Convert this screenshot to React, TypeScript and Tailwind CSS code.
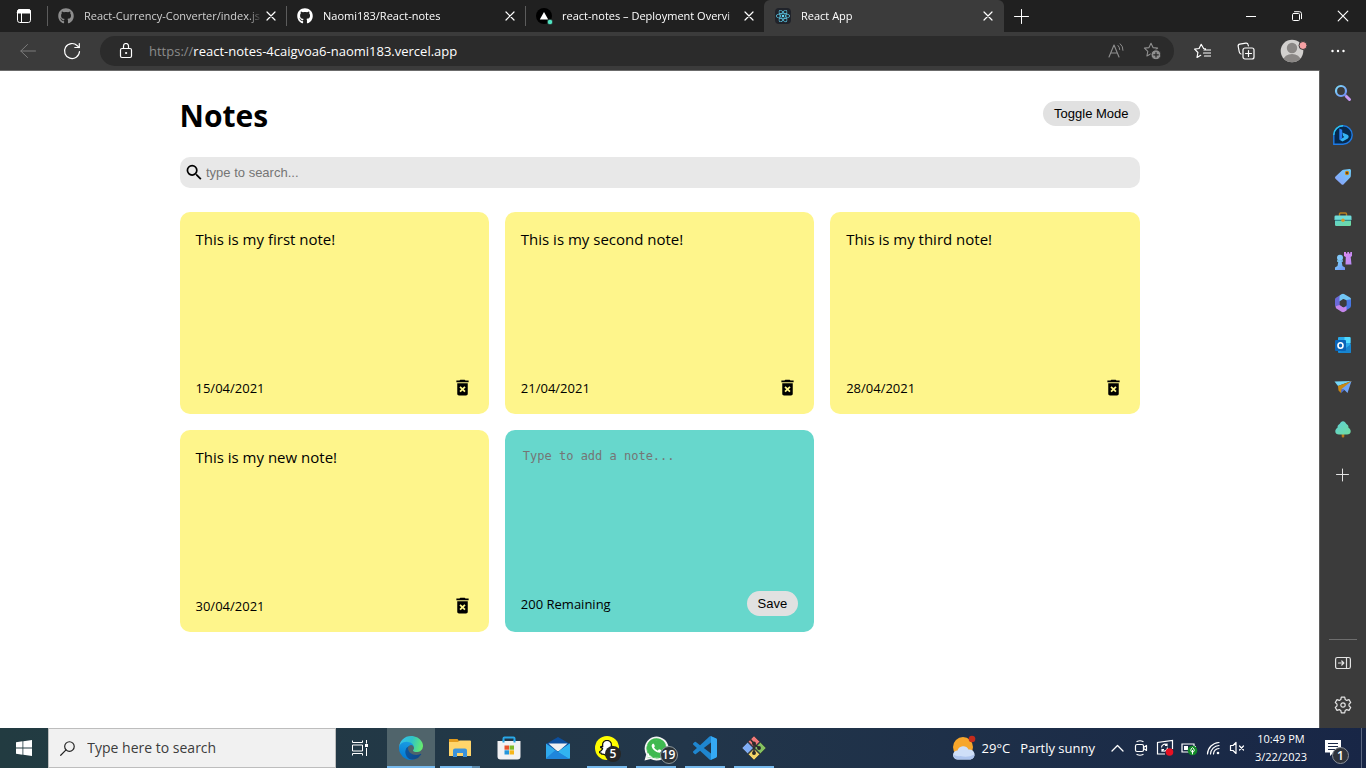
import { useState } from "react";
import type { ReactNode } from "react";
import { FaGithub, FaReact, FaSnapchatGhost, FaWhatsapp } from "react-icons/fa";
import { MdDeleteForever, MdSearch } from "react-icons/md";

type Note = { id: number; text: string; date: string };

const initialNotes: Note[] = [
  { id: 1, text: "This is my first note!", date: "15/04/2021" },
  { id: 2, text: "This is my second note!", date: "21/04/2021" },
  { id: 3, text: "This is my third note!", date: "28/04/2021" },
  { id: 4, text: "This is my new note!", date: "30/04/2021" },
];

const CHARACTER_LIMIT = 200;

function Line({ children, size = 16, box = 16 }: { children: ReactNode; size?: number; box?: number }) {
  return (
    <svg width={size} height={size} viewBox={`0 0 ${box} ${box}`} fill="none" stroke="currentColor" strokeLinecap="round" strokeLinejoin="round" aria-hidden="true">
      {children}
    </svg>
  );
}

/* ---------- Browser chrome ---------- */

function CloseIcon() {
  return (
    <Line size={10} box={10}>
      <path d="M1 1l8 8M9 1l-8 8" strokeWidth="1.2" />
    </Line>
  );
}

function VercelIcon() {
  return (
    <svg width="17" height="17" viewBox="0 0 17 17" className="shrink-0" aria-hidden="true">
      <circle cx="8" cy="8" r="8" fill="#000" />
      <path d="M8 4l4.200 7.400H3.800z" fill="#fff" />
      <circle cx="14" cy="14" r="2.800" fill="#50e3c2" stroke="#202020" strokeWidth="0.8" />
    </svg>
  );
}

function Tab({ icon, title, active = false, faded = false }: { icon: ReactNode; title: string; active?: boolean; faded?: boolean }) {
  return (
    <div
      className={
        active
          ? "-ml-px flex w-[240px] shrink-0 items-center rounded-t-md bg-[#3b3b3b] pr-2 pl-[11px]"
          : "flex w-[239px] shrink-0 items-center pr-2 pl-2.5"
      }
    >
      <span className={faded ? "flex w-4 shrink-0 justify-center text-[#8d8d8d]" : "flex w-4 shrink-0 justify-center text-white"}>{icon}</span>
      <a
        href="#tab"
        className={
          faded
            ? "ml-2.5 w-[178px] overflow-hidden text-[11px] leading-4 whitespace-nowrap text-[#d0d0d0] [mask-image:linear-gradient(to_right,black_92%,transparent)]"
            : "ml-2.5 w-[178px] overflow-hidden text-[11px] leading-4 whitespace-nowrap text-white [mask-image:linear-gradient(to_right,black_92%,transparent)]"
        }
      >
        {title}
      </a>
      <button type="button" aria-label={`Close ${title}`} className="ml-auto flex size-4 items-center justify-center text-white">
        <CloseIcon />
      </button>
    </div>
  );
}

function TabStrip() {
  return (
    <div className="flex h-8 bg-[#202020] text-white">
      <button type="button" aria-label="Tab actions menu" className="flex w-12 shrink-0 items-center justify-center">
        <Line>
          <rect x="1.5" y="1.5" width="13" height="13" rx="2.2" />
          <path d="M1.5 3.5a2 2 0 012-2h9a2 2 0 012 2v1.5h-13z" fill="currentColor" />
          <path d="M5.500 5v9" />
        </Line>
      </button>
      <div className="my-1.5 -ml-px w-px bg-[#5c5c5c]" />
      <Tab icon={<FaGithub size={16} />} title="React-Currency-Converter/index.js" faded />
      <div className="my-1.5 -ml-px w-px bg-[#5c5c5c]" />
      <Tab icon={<FaGithub size={16} />} title="Naomi183/React-notes" />
      <div className="my-1.5 -ml-px w-px bg-[#5c5c5c]" />
      <Tab icon={<VercelIcon />} title="react-notes – Deployment Overvi" />
      <Tab
        icon={
          <span className="flex size-4 shrink-0 items-center justify-center rounded-sm bg-[#20232a] text-[#61dafb]">
            <FaReact size={14} />
          </span>
        }
        title="React App"
        active
      />
      <button type="button" aria-label="New tab" className="flex w-[34px] shrink-0 items-center justify-center">
        <Line>
          <path d="M8.500 1.500v14M1.500 8.500h14" />
        </Line>
      </button>
      <div className="ml-auto flex">
        <button type="button" aria-label="Minimize" className="flex w-[46px] items-center justify-center">
          <Line size={10} box={10}>
            <path d="M0 5.500h10" />
          </Line>
        </button>
        <button type="button" aria-label="Restore" className="flex w-[46px] items-center justify-center">
          <Line size={10} box={10}>
            <rect x="0.5" y="2.5" width="7" height="7" rx="1" />
            <path d="M2.500 0.700h5a2 2 0 012 2v5" />
          </Line>
        </button>
        <button type="button" aria-label="Close window" className="flex w-[46px] items-center justify-center">
          <Line size={12} box={12}>
            <path d="M1.200 1.200l9.600 9.600M10.800 1.200l-9.600 9.600" strokeWidth="1.2" />
          </Line>
        </button>
      </div>
    </div>
  );
}

function ToolButton({ label, children, className = "text-white" }: { label: string; children: ReactNode; className?: string }) {
  return (
    <button type="button" aria-label={label} className={`flex w-11 shrink-0 items-center justify-center ${className}`}>
      {children}
    </button>
  );
}

const starPath = "M8 1.300l2 4.300 4.600.5-3.400 3.200.9 4.700L8 11.700 3.900 14l.9-4.700L1.400 6.100 6 5.600z";

function Toolbar() {
  return (
    <div className="flex h-[38px] bg-[#3b3b3b] px-1.5">
      <ToolButton label="Back" className="text-[#7c7c7c]">
        <Line>
          <path d="M15.500 8H.8M7.500 1.500L.8 8l6.700 6.500" />
        </Line>
      </ToolButton>
      <ToolButton label="Refresh">
        <Line size={18} box={18}>
          <path d="M16.500 9.500a7.500 7.500 0 11-2.200-5.800L16 5.500" strokeWidth="1.2" />
          <path d="M16.300 1.500v4h-4.500" strokeWidth="1.2" />
        </Line>
      </ToolButton>
      <div className="mx-1.5 my-1 flex flex-1 items-center rounded-full bg-[#2b2b2b] pl-[18px]">
        <span className="text-white">
          <Line>
            <rect x="2.500" y="5.500" width="11" height="9" rx="1.500" strokeWidth="1.2" />
            <path d="M5.500 5.500V3a2.500 2.500 0 015 0v2.500" strokeWidth="1.2" />
            <circle cx="8" cy="10" r="0.600" fill="currentColor" />
          </Line>
        </span>
        <div className="ml-[15px] flex-1 text-[13px] leading-5 text-[#8c8c8c]">
          https://<span className="text-white">react-notes-4caigvoa6-naomi183.vercel.app</span>
        </div>
        <button type="button" aria-label="Read aloud" className="flex w-9 items-center justify-center text-[#8f8f8f]">
          <Line size={18} box={18}>
            <path d="M2 15L7 3l5 12M3.800 11h6.400" strokeWidth="1.1" />
            <path d="M11 3.500q1.700 1.500 1.700 4M13.200 1.800q3 2.500 2.800 6.500" />
          </Line>
        </button>
        <button type="button" aria-label="Add this page to favorites" className="mr-1 flex w-9 items-center justify-center text-[#8f8f8f]">
          <Line size={18} box={18}>
            <path d={starPath} strokeWidth="1.1" />
            <circle cx="13" cy="12.800" r="5" fill="currentColor" stroke="#2b2b2b" strokeWidth="1" />
            <path d="M13 10.500v4.600M10.700 12.800h4.600" stroke="#2b2b2b" strokeWidth="1.2" />
          </Line>
        </button>
      </div>
      <ToolButton label="Favorites">
        <Line size={17} box={17}>
          <path d="M11.500 5.800L9.600 5.500 7.200 1.300 5.100 5.500l-4.500.7 3.300 3.300-.9 5 3.700-2.200M10 7h6.500M9.500 10h7M10.500 13h6" strokeWidth="1.2" />
        </Line>
      </ToolButton>
      <ToolButton label="Collections">
        <Line size={18} box={18}>
          <path d="M4 12a2.500 2.500 0 01-1.700-2L1.200 4.500a2 2 0 011.600-2.300l6-1a2 2 0 012.300 1.500l.3 1.100" strokeWidth="1.2" />
          <rect x="6" y="6" width="11" height="11" rx="2" strokeWidth="1.2" />
          <path d="M11.500 8.500v6M8.500 11.500h6" strokeWidth="1.2" />
        </Line>
      </ToolButton>
      <button type="button" aria-label="Profile" className="flex w-12 shrink-0 items-center justify-center pl-[3px]">
        <svg width="27" height="24" viewBox="0 0 27 24" aria-hidden="true">
          <defs>
            <clipPath id="avatar-circle">
              <circle cx="12" cy="12" r="11.300" />
            </clipPath>
          </defs>
          <circle cx="12" cy="12" r="11.300" fill="#d2d0ce" />
          <g clipPath="url(#avatar-circle)" fill="#8a8785">
            <circle cx="12" cy="9" r="5.200" />
            <ellipse cx="12" cy="21" rx="8.500" ry="6" />
          </g>
          <circle cx="23" cy="6.500" r="4" fill="#f7a1a4" stroke="#3b3b3b" strokeWidth="1" />
        </svg>
      </button>
      <ToolButton label="Settings and more">
        <Line>
          <path d="M2.500 8h.01M8 8h.01M13.500 8h.01" strokeWidth="2.4" />
        </Line>
      </ToolButton>
    </div>
  );
}

/* ---------- Notes page ---------- */

function NoteCard({ note, onDelete }: { note: Note; onDelete: (id: number) => void }) {
  return (
    <article className="flex min-h-[202px] flex-col justify-between rounded-[10px] bg-[#fef58b] p-4">
      <p className="text-[15px] leading-[22px]">{note.text}</p>
      <div className="flex items-center justify-between">
        <small className="text-[13px] leading-5">{note.date}</small>
        <button type="button" aria-label={`Delete note: ${note.text}`} onClick={() => onDelete(note.id)}>
          <MdDeleteForever size={21} />
        </button>
      </div>
    </article>
  );
}

function NotesPage() {
  const [notes, setNotes] = useState(initialNotes);
  const [query, setQuery] = useState("");
  const [draft, setDraft] = useState("");
  const [dark, setDark] = useState(false);

  const save = () => {
    if (!draft.trim()) return;
    setNotes([...notes, { id: Date.now(), text: draft, date: new Date().toLocaleDateString("en-GB") }]);
    setDraft("");
  };

  return (
    <main className={dark ? "flex-1 border-t border-[#6b6b6b] bg-black" : "flex-1 border-t border-[#6b6b6b] bg-white"}>
      <div className="mx-auto max-w-[960px] text-black">
        <header className="mb-px flex h-[85px] items-center justify-between">
          <h1 className={dark ? "pt-1 text-[30px] leading-10 font-bold text-white" : "pt-1 text-[30px] leading-10 font-bold"}>Notes</h1>
          <button
            type="button"
            className="rounded-full bg-[#e1e1e1] px-[11px] font-['Liberation_Sans',sans-serif] text-[13px] leading-[25px]"
            onClick={() => setDark(!dark)}
          >
            Toggle Mode
          </button>
        </header>
        <label className="flex h-[31px] items-center gap-0.5 rounded-[10px] bg-[#e8e8e8] pl-1">
          <MdSearch size={21} />
          <input
            type="text"
            aria-label="Search notes"
            placeholder="type to search..."
            value={query}
            onChange={(event) => setQuery(event.target.value)}
            className="w-full bg-transparent font-['Liberation_Sans',sans-serif] text-[13px] leading-5 outline-none placeholder:text-[#757575]"
          />
        </label>
        <div className="mt-6 grid grid-cols-3 gap-4">
          {notes
            .filter((note) => note.text.toLowerCase().includes(query.toLowerCase()))
            .map((note) => (
              <NoteCard key={note.id} note={note} onDelete={(id) => setNotes(notes.filter((item) => item.id !== id))} />
            ))}
          <article className="flex min-h-[202px] flex-col justify-between rounded-[10px] bg-[#67d7cc] p-4">
            <textarea
              aria-label="New note"
              placeholder="Type to add a note..."
              maxLength={CHARACTER_LIMIT}
              value={draft}
              onChange={(event) => setDraft(event.target.value)}
              className="h-[120px] w-full resize-none bg-transparent px-0.5 py-0.5 font-['DejaVu_Sans_Mono',monospace] text-[12px] leading-4 outline-none placeholder:text-[#757575]"
            />
            <div className="flex items-center justify-between">
              <small className="text-[13px] leading-5">{CHARACTER_LIMIT - draft.length} Remaining</small>
              <button
                type="button"
                className="rounded-full bg-[#e1e1e1] px-[11px] font-['Liberation_Sans',sans-serif] text-[13px] leading-[25px]"
                onClick={save}
              >
                Save
              </button>
            </div>
          </article>
        </div>
      </div>
    </main>
  );
}

/* ---------- Edge sidebar ---------- */

function SideButton({ label, children }: { label: string; children: ReactNode }) {
  return (
    <button type="button" aria-label={label} className="flex h-[42px] w-full items-center justify-center text-[#e3e3e3]">
      {children}
    </button>
  );
}

function Sidebar() {
  return (
    <aside className="flex w-[47px] shrink-0 flex-col items-center border-l border-[#5f5f5f] bg-[#3b3b3b] py-0.5">
      <svg width="0" height="0" className="absolute" aria-hidden="true">
        <defs>
          <linearGradient id="sky" x1="0" y1="0" x2="1" y2="1">
            <stop offset="0" stopColor="#7fdcfb" />
            <stop offset="1" stopColor="#6f8df5" />
          </linearGradient>
          <linearGradient id="tag" x1="1" y1="0" x2="0" y2="1">
            <stop offset="0" stopColor="#6ccffb" />
            <stop offset="1" stopColor="#8c9df8" />
          </linearGradient>
          <linearGradient id="violet" x1="0" y1="0" x2="1" y2="1">
            <stop offset="0" stopColor="#e08bf0" />
            <stop offset="1" stopColor="#b58af5" />
          </linearGradient>
          <linearGradient id="mint" x1="0" y1="0" x2="1" y2="1">
            <stop offset="0" stopColor="#5fd0d6" />
            <stop offset="1" stopColor="#6fdca0" />
          </linearGradient>
        </defs>
      </svg>
      <SideButton label="Search">
        <svg width="18" height="18" viewBox="0 0 18 18">
          <circle cx="7" cy="7" r="5" fill="none" stroke="url(#sky)" strokeWidth="2.2" />
          <path d="M12.200 12.200l3.300 3.300" stroke="#c79af5" strokeWidth="3" strokeLinecap="round" />
          <path d="M10.500 10.500l1.500 1.500" stroke="#7c8ff0" strokeWidth="1.6" />
        </svg>
      </SideButton>
      <SideButton label="Bing">
        <svg width="20" height="20" viewBox="0 0 20 20">
          <path d="M.8 19.200V10a9.200 9.200 0 119.200 9.200z" fill="#06294d" stroke="#1e7be6" strokeWidth="1.4" />
          <path d="M.8 10A9.200 9.200 0 0110 .8" fill="none" stroke="#2cc6ee" strokeWidth="1.4" />
          <path d="M9.300 7.500l5.200 2.300a2.200 2.200 0 01.3 3.700L9.500 16.500l-3-1.800 4.800-2.800-1.200-.8z" fill="#35b4f5" />
          <path d="M6.300 3.500l2.900 1.200v8.600L6.800 15l-.5-1z" fill="#2a7df0" />
        </svg>
      </SideButton>
      <SideButton label="Shopping">
        <svg width="18" height="18" viewBox="0 0 18 18">
          <path d="M9.500 1.700L15.500 1a1.400 1.400 0 011.500 1.500l-.2 5.500a2 2 0 01-.6 1.400l-6.500 6.800a1.600 1.600 0 01-2.300 0L1.500 10.700a1.600 1.600 0 010-2.300L8.200 2.200a2 2 0 011.300-.5z" fill="url(#tag)" />
          <circle cx="13" cy="5" r="2.200" fill="#c98512" />
          <circle cx="13" cy="5" r="1" fill="#453822" />
        </svg>
      </SideButton>
      <SideButton label="Tools">
        <svg width="18" height="18" viewBox="0 0 18 18">
          <path d="M5.500 6V4a1 1 0 011-1h5a1 1 0 011 1v2" fill="none" stroke="#b8801e" strokeWidth="1.4" />
          <rect x="1" y="6" width="16" height="10" rx="1.200" fill="url(#mint)" />
          <path d="M.5 6.800A1.300 1.300 0 011.800 5.500h14.400a1.300 1.300 0 011.300 1.300V10H.5z" fill="#6fdcd8" />
          <path d="M1 10.300h16" stroke="#25777e" />
          <circle cx="9" cy="10.300" r="1.700" fill="#d69a28" />
        </svg>
      </SideButton>
      <SideButton label="Games">
        <svg width="20" height="20" viewBox="0 0 20 20">
          <path d="M11 1h2v1.500h1.300V1h1.700v1.500h1.300V1H19v4l-1.300 1 .8 7.500h-6L12.800 6 11 5z" fill="url(#violet)" />
          <circle cx="7" cy="6.700" r="3" fill="#82c9fb" />
          <path d="M4 9.300h6v1.500H8.700l.8 4.200 2.500 1.600V19H2v-2.400l2.500-1.600.8-4.200H4z" fill="url(#sky)" />
        </svg>
      </SideButton>
      <SideButton label="Microsoft 365">
        <svg width="18" height="20" viewBox="0 0 18 20">
          <path d="M7.500 1.200L9 10l-2.500 6L2 13.800A2 2 0 011 12V6.500a2 2 0 011-1.800z" fill="#6b69d8" />
          <path d="M7.500 1.200a3 3 0 013 0l5.500 3.300a2 2 0 011 1.800V9L9.500 6 5.500 8.500V4.500a3 3 0 012-3.300z" fill="#72c6f4" />
          <path d="M17 6.300v6.500a3 3 0 01-1.500 2.500l-5 3-3.500-2 5.500-3.800V7z" fill="#4777e4" />
          <path d="M1.500 13.300l4-1.300 4 2.500 3-1v4l-2 1.200a3 3 0 01-3 0L2 15.300z" fill="#c485eb" />
          <path d="M9 6.300l3.300 1.900v3.900L9 14l-3.300-1.900V8.200z" fill="#3b3b3b" />
        </svg>
      </SideButton>
      <SideButton label="Outlook">
        <svg width="18" height="18" viewBox="0 0 18 18">
          <rect x="4" y="1" width="12.500" height="14" rx="1" fill="#28a8ea" />
          <path d="M10.500 1h5a1 1 0 011 1v5h-6z" fill="#50d9ff" />
          <path d="M17 8v8a1 1 0 01-1 1H5a1 1 0 01-1-1v-2l7-1z" fill="#1490df" />
          <path d="M17 8.500L5 16.700h11a1 1 0 001-1z" fill="#1783ce" />
          <rect x="1" y="4" width="11" height="11" rx="1" fill="#0a64b8" />
          <ellipse cx="6.500" cy="9.500" rx="2.500" ry="2.800" fill="none" stroke="#fff" strokeWidth="1.6" />
        </svg>
      </SideButton>
      <SideButton label="Drop">
        <svg width="18" height="16" viewBox="0 0 18 16">
          <path d="M17.500 2L.5 2.500 4 7z" fill="#75d8fa" />
          <path d="M17.500 2L4 7l.5 4.500L7 14l1-3z" fill="#c98812" />
          <path d="M17.500 2L7.500 10l3 1 3 3z" fill="#6fa4f8" />
          <path d="M7.500 10L7 14l3.500-3z" fill="#4a6fd8" />
        </svg>
      </SideButton>
      <SideButton label="E-tree">
        <svg width="18" height="18" viewBox="0 0 18 18">
          <rect x="7.700" y="11" width="2.600" height="6.500" rx="1" fill="#b9791b" />
          <path d="M9 1.200c1.500 0 2.400 1.200 3.200 2.600 2 1.200 2.300 2.400 2.300 4 1.600 1 2.200 2.200 2.200 3.600 0 2-1.600 3-3.700 3H5c-2.100 0-3.700-1-3.700-3 0-1.400.6-2.600 2.200-3.600 0-1.600.3-2.800 2.300-4C6.600 2.400 7.500 1.200 9 1.200z" fill="url(#mint)" />
        </svg>
      </SideButton>
      <div className="mt-1 w-full">
        <SideButton label="Customize sidebar">
          <Line size={14} box={14}>
            <path d="M6.500 1v12M.5 6.500h12" />
          </Line>
        </SideButton>
      </div>
      <div className="mt-auto mb-0.5 h-px w-7 bg-[#6e6e6e]" />
      <SideButton label="Hide sidebar">
        <Line>
          <rect x="0.600" y="2.500" width="14.800" height="11" rx="1.800" strokeWidth="1.2" />
          <path d="M11.500 2.500v11M3.500 8h5M6.800 6l2 2-2 2" strokeWidth="1.2" />
        </Line>
      </SideButton>
      <SideButton label="Settings">
        <Line size={18} box={18}>
          <path d="M7.300 1.200h3.400l.5 2.300 1.500.9 2.300-.8 1.700 2.900-1.700 1.600v1.800l1.700 1.600-1.700 2.900-2.300-.8-1.500.9-.5 2.300H7.300l-.5-2.300-1.500-.9-2.300.8-1.700-2.900L3 9.900V8.100L1.300 6.500 3 3.600l2.300.8 1.500-.9z" strokeWidth="1.2" />
          <circle cx="9" cy="9" r="2.200" strokeWidth="1.2" />
        </Line>
      </SideButton>
    </aside>
  );
}

/* ---------- Windows taskbar ---------- */

function EdgeLogo() {
  return (
    <svg width="24" height="24" viewBox="0 0 256 256" aria-hidden="true">
      <defs>
        <linearGradient id="edge-dark" x1="0" y1="0" x2="1" y2="0.500">
          <stop offset="0" stopColor="#0c59a4" />
          <stop offset="1" stopColor="#114a8b" />
        </linearGradient>
        <linearGradient id="edge-blue" x1="0.500" y1="0" x2="0.300" y2="1">
          <stop offset="0" stopColor="#1b9de2" />
          <stop offset="1" stopColor="#0078d4" />
        </linearGradient>
        <linearGradient id="edge-green" x1="0" y1="0.300" x2="1" y2="0.500">
          <stop offset="0" stopColor="#35c1f1" />
          <stop offset="0.500" stopColor="#2fc2c8" />
          <stop offset="1" stopColor="#66eb6e" />
        </linearGradient>
      </defs>
      <path d="M231 190.500c-3.400 1.800-6.900 3.400-10.500 4.700a101.500 101.500 0 01-35.900 6.400c-47.300 0-88.500-32.500-88.500-74.300a31.500 31.500 0 0116.400-27.300c-42.800 1.800-53.800 46.400-53.800 72.500 0 73.900 68.100 81.400 82.800 81.400 7.900 0 19.800-2.300 27-4.600l1.300-.4a128.300 128.300 0 0066.600-52.800 4 4 0 00-5.400-5.600z" fill="url(#edge-dark)" />
      <path d="M105.700 241.400a79.200 79.200 0 01-22.700-21.300 80.700 80.700 0 0129.500-120c3.200-1.500 8.400-4.100 15.500-4a32.400 32.400 0 0125.700 13 31.900 31.900 0 016.300 18.700c0-.2 24.500-79.600-80-79.600-43.900 0-80 41.600-80 78.200a130.200 130.200 0 0012.100 56 128 128 0 00156.400 67 75.500 75.500 0 01-62.800-8z" fill="url(#edge-blue)" />
      <path d="M152.300 148.900c-.9 1-3.300 2.500-3.300 5.600 0 2.600 1.700 5.200 4.800 7.300 14.400 10 41.400 8.700 41.500 8.700 10.600 0 21.100-2.900 30.300-8.300A61.400 61.400 0 00256 109.200c.3-22.400-8-37.300-11.300-43.900C223.500 23.900 177.700 0 128 0A128 128 0 000 126.200c.5-36.500 36.800-66 80-66 3.500 0 23.500.3 42 10.100 16.300 8.600 24.900 18.900 30.800 29.200 6.200 10.700 7.300 24.100 7.300 29.500 0 5.300-2.700 13.300-7.800 19.900z" fill="url(#edge-green)" />
    </svg>
  );
}

function ExplorerLogo() {
  return (
    <svg width="24" height="24" viewBox="0 0 24 24" aria-hidden="true">
      <path d="M1 3h8.500l1.500 2H23v4H1z" fill="#e39c1d" />
      <path d="M1 6h9l1.500-1.500H22a1 1 0 011 1V20H1z" fill="#ffd56b" />
      <path d="M5 21v-6.500a2 2 0 012-2h10a2 2 0 012 2V21h-4v-4H9v4z" fill="#3b93dc" />
    </svg>
  );
}

function StoreLogo() {
  return (
    <svg width="24" height="24" viewBox="0 0 24 24" aria-hidden="true">
      <path d="M6.500 6.500V2.500a1 1 0 011-1h9a1 1 0 011 1v4" fill="none" stroke="#29a8e8" strokeWidth="2" />
      <path d="M.5 5h23v15.500a3 3 0 01-3 3h-17a3 3 0 01-3-3z" fill="#f1f1f3" />
      <path d="M6.500 4.500v2M17.500 4.500v2" stroke="#29a8e8" strokeWidth="2" />
      <path d="M7.500 9.500H12v4.200H7.500z" fill="#e8512c" />
      <path d="M12.500 9.500H17v4.200h-4.500z" fill="#7fba28" />
      <path d="M7.500 14.300H12v4.200H7.500z" fill="#2496dc" />
      <path d="M12.500 14.300H17v4.200h-4.500z" fill="#f6b61a" />
    </svg>
  );
}

function MailLogo() {
  return (
    <svg width="24" height="24" viewBox="0 0 24 24" aria-hidden="true">
      <path d="M0 8l12-7 12 7v5H0z" fill="#0c4f9e" />
      <path d="M2.500 7.500h19L13 15h-2z" fill="#f0f0f2" />
      <path d="M0 7.500L12 16v7H1a1 1 0 01-1-1z" fill="#2fa9ec" />
      <path d="M24 7.500L2 22.800h21a1 1 0 001-1z" fill="#35bdf4" />
      <path d="M0 22.300L9.500 14l2.500 1.800 11.500 7-.5.200H1z" fill="#1f86da" />
      <path d="M24 7.500v15L12.500 15.500z" fill="#31b4f0" />
    </svg>
  );
}

function GitLogo() {
  return (
    <svg width="26" height="26" viewBox="0 0 26 26" aria-hidden="true">
      <g transform="rotate(45 13 13)" stroke="#33302a" strokeWidth="0.500">
        <rect x="4.500" y="4.500" width="8" height="8" fill="#f0797a" />
        <rect x="13.500" y="4.500" width="8" height="8" fill="#84c261" />
        <rect x="4.500" y="13.500" width="8" height="8" fill="#7fadf5" />
        <rect x="13.500" y="13.500" width="8" height="8" fill="#f4d568" />
      </g>
      <g stroke="#2b2b2b" strokeWidth="1.500" fill="#2b2b2b">
        <path d="M9.500 4.500l3.500 4v9M13 9l5 4" fill="none" />
        <circle cx="13" cy="8.500" r="1.200" />
        <circle cx="18" cy="13" r="1.200" />
        <circle cx="13" cy="18" r="1.200" />
      </g>
    </svg>
  );
}

function Badge({ children, className }: { children: ReactNode; className: string }) {
  return (
    <span className={`absolute flex items-center justify-center rounded-full text-[12px] leading-none font-semibold text-white ${className}`}>
      {children}
    </span>
  );
}

function TaskApp({ label, children, state = "idle" }: { label: string; children: ReactNode; state?: "idle" | "running" | "focused" | "grouped" }) {
  return (
    <button
      type="button"
      aria-label={label}
      className={
        state === "focused"
          ? "flex w-12 flex-col items-center bg-[#50646b]"
          : "flex w-12 flex-col items-center"
      }
    >
      <span className="relative flex flex-1 items-center justify-center pt-0.5">{children}</span>
      {state === "idle" && <span className="h-0.5" />}
      {state === "focused" && <span className="h-0.5 w-full bg-[#76b9ed]" />}
      {state === "running" && <span className="h-0.5 w-10 bg-[#76b9ed]" />}
      {state === "grouped" && (
        <span className="flex h-0.5 w-10">
          <span className="flex-1 bg-[#76b9ed]" />
          <span className="w-2 bg-[#5a89ac]" />
        </span>
      )}
    </button>
  );
}

function TrayButton({ label, children }: { label: string; children: ReactNode }) {
  return (
    <button type="button" aria-label={label} className="flex w-6 items-center justify-center text-white">
      {children}
    </button>
  );
}

function Taskbar() {
  return (
    <footer className="flex h-10 bg-linear-to-r from-[#223b41] via-[#22364a] to-[#182646] text-white">
      <button type="button" aria-label="Start" className="flex w-12 shrink-0 items-center justify-center">
        <svg width="16" height="16" viewBox="0 0 16 16" fill="currentColor">
          <path d="M0 2.200l6.500-.9v6.300H0zM7.300 1.200L16 0v7.600H7.300zM0 8.400h6.500v6.300L0 13.800zM7.300 8.400H16V16l-8.700-1.200z" />
        </svg>
      </button>
      <label className="flex w-[288px] shrink-0 items-center border border-[#bdbdbd] bg-[#f1f1f1] pl-[11px] text-[#222]">
        <Line size={17} box={17}>
          <circle cx="10.500" cy="6.300" r="5.300" strokeWidth="1.3" />
          <path d="M6.700 10.100L.8 16" strokeWidth="1.3" />
        </Line>
        <input
          type="text"
          aria-label="Type here to search"
          placeholder="Type here to search"
          className="ml-3 w-full bg-transparent text-[14px] leading-5 outline-none placeholder:text-[#3c3c3c]"
        />
      </label>
      <button type="button" aria-label="Task view" className="mr-[3px] flex w-12 shrink-0 items-center justify-center">
        <svg width="17" height="16" viewBox="0 0 17 16" fill="none" stroke="currentColor">
          <path d="M.5.5v2h10v-2M.5 15.500v-2h10v2M.5 5h10v6H.5zM14.500 0v3.500M14.500 8v8" />
          <path d="M13 4h3v3h-3z" fill="currentColor" stroke="none" />
        </svg>
      </button>
      <div className="flex gap-px">
        <TaskApp label="Microsoft Edge" state="focused">
          <EdgeLogo />
        </TaskApp>
        <TaskApp label="File Explorer" state="grouped">
          <ExplorerLogo />
        </TaskApp>
        <TaskApp label="Microsoft Store">
          <StoreLogo />
        </TaskApp>
        <TaskApp label="Mail">
          <MailLogo />
        </TaskApp>
        <TaskApp label="Snapchat" state="running">
          <span className="flex size-6 items-center justify-center rounded-full bg-[#fffc00] text-white">
            <FaSnapchatGhost size={16} stroke="#111" strokeWidth={40} />
          </span>
          <Badge className="-right-0.5 bottom-1 size-4 bg-[#262626]">5</Badge>
        </TaskApp>
        <TaskApp label="WhatsApp" state="running">
          <svg width="25" height="25" viewBox="0 0 25 25" aria-hidden="true">
            <path d="M.5 24.500l1.700-6A12 12 0 116.700 23z" fill="#f4f4f4" />
            <path d="M3.200 21.800l1-3.800a10 10 0 113.200 3z" fill="#3fb950" />
            <g transform="translate(1.500 1.200)" color="#fff">
              <FaWhatsapp size={22} fill="#fff" />
            </g>
            <circle cx="12.500" cy="12" r="8.500" fill="none" stroke="#3fb950" strokeWidth="2.500" />
          </svg>
          <Badge className="-right-[9px] bottom-0.5 size-[18px] border border-[#8d979b] bg-[#2c3338]">19</Badge>
        </TaskApp>
        <TaskApp label="Visual Studio Code" state="running">
          <svg width="24" height="24" viewBox="0 0 24 24" aria-hidden="true">
            <path fillRule="evenodd" fill="#1f86cf" d="M23.150 2.587L18.210.210a1.494 1.494 0 00-1.705.290l-9.460 8.630-4.120-3.128a.999.999 0 00-1.276.057L.327 7.261A1 1 0 00.326 8.740L3.899 12 .326 15.260a1 1 0 00.001 1.479L1.650 17.940a.999.999 0 001.276.057l4.120-3.128 9.460 8.630a1.492 1.492 0 001.704.290l4.942-2.377A1.500 1.500 0 0024 20.060V3.939a1.500 1.500 0 00-.850-1.352zM18.004 17.448L10.826 12l7.178-5.448z" />
            <path fill="#35a9f4" d="M18 .2l5.200 2.400a1.500 1.500 0 01.8 1.300v16.200a1.500 1.500 0 01-.8 1.300L18 23.800z" />
          </svg>
        </TaskApp>
        <TaskApp label="Git Bash" state="running">
          <GitLogo />
        </TaskApp>
      </div>
      <div className="ml-auto flex">
        <button type="button" className="flex items-center text-[13px] leading-5 whitespace-nowrap">
          <svg width="24" height="26" viewBox="0 0 24 26" className="mr-1.5" aria-hidden="true">
            <circle cx="11" cy="12" r="10" fill="#f7a62b" />
            <path d="M5.500 24.500a4.500 4.500 0 010-9 6 6 0 0111-1 5 5 0 012 10z" fill="#cfdff8" />
            <path d="M5.500 24.500a4.500 4.500 0 01-4-5q3 2.500 7 1.500 7 2 14-1.500a5 5 0 01-4 5z" fill="#aec5ee" />
            <circle cx="20" cy="4" r="3.300" fill="#c42b1c" />
          </svg>
          29°C
          <span className="ml-2.5">Partly sunny</span>
        </button>
        <div className="ml-2.5 flex">
          <TrayButton label="Show hidden icons">
            <Line size={13} box={13}>
              <path d="M1 9l5.500-5.500L12 9" strokeWidth="1.3" />
            </Line>
          </TrayButton>
          <TrayButton label="Meet now">
            <Line>
              <rect x="2.500" y="4.500" width="8" height="7" rx="1.500" strokeWidth="1.2" />
              <path d="M10.500 7.500l3-2v5l-3-2M4 1.500q3-1.500 6 0M4 14.500q3 1.500 6 0" strokeWidth="1.2" />
            </Line>
          </TrayButton>
          <TrayButton label="Synaptics touchpad">
            <svg width="18" height="18" viewBox="0 0 18 18" fill="none" stroke="currentColor" strokeWidth="1.2">
              <path d="M16.500 10V1.500l-15 2v11.500H9" />
              <path d="M5.500 8.500A3.200 3.200 0 0111 6.200V4.500M11 6.500H9M11.500 8.500A3.200 3.200 0 016 11v1.700M6 10.500h2" />
              <circle cx="13.500" cy="13" r="3.800" fill="#e81123" stroke="none" />
            </svg>
          </TrayButton>
          <TrayButton label="Battery">
            <svg width="17" height="16" viewBox="0 0 17 16">
              <path d="M1 4h12v8H1z" fill="none" stroke="#fff" strokeWidth="1.2" />
              <path d="M13.500 6H15v4h-1.500zM3 6h4v4H3z" fill="#fff" />
              <circle cx="11.500" cy="10.500" r="4.800" fill="#128a28" />
              <path d="M11.500 7.500q3.500 3 0 5-3.500-2 0-5z" fill="none" stroke="#fff" strokeWidth="1" />
              <path d="M11.500 10v4.300" stroke="#fff" />
            </svg>
          </TrayButton>
          <TrayButton label="Wi-Fi">
            <Line size={14} box={14}>
              <path d="M1.500 13A12 12 0 0113 1.500M4.500 13A9 9 0 0113 4.500M7.500 13A6 6 0 0113 7.500" strokeWidth="1.2" />
              <circle cx="12" cy="12" r="1.300" fill="currentColor" stroke="none" />
            </Line>
          </TrayButton>
          <TrayButton label="Volume muted">
            <Line>
              <path d="M1.500 5.500H4l3-3v11l-3-3H1.500zM10.500 6l4 4M14.500 6l-4 4" strokeWidth="1.2" />
            </Line>
          </TrayButton>
        </div>
        <div className="flex w-16 flex-col items-center justify-center text-[11px] leading-[18px] whitespace-nowrap">
          <time>10:49 PM</time>
          <time>3/22/2023</time>
        </div>
        <button type="button" aria-label="Notifications" className="relative flex w-12 items-center pl-3">
          <svg width="16" height="16" viewBox="0 0 16 16">
            <path d="M0 0h16v12.500H8.500L5 16v-3.500H0z" fill="#fff" />
            <path d="M3 3.500h10M3 6.500h10M3 9.500h7" stroke="#1a2847" strokeWidth="1.1" />
          </svg>
          <Badge className="right-3 bottom-1 size-[17px] border border-[#8b9099] bg-[#30343c]">1</Badge>
        </button>
        <div className="mr-1 w-px bg-[#5b6780]" />
      </div>
    </footer>
  );
}

export default function App() {
  return (
    <div className="flex min-h-screen flex-col font-['Open_Sans',sans-serif]">
      <TabStrip />
      <Toolbar />
      <div className="flex flex-1">
        <NotesPage />
        <Sidebar />
      </div>
      <Taskbar />
    </div>
  );
}
